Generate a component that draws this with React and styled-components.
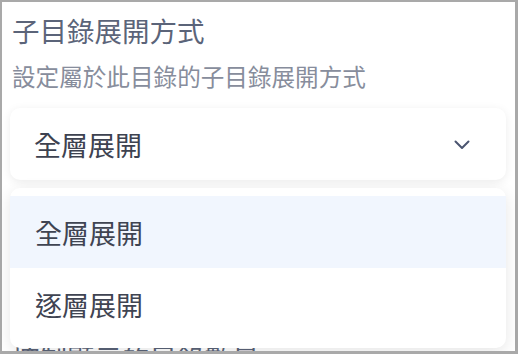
import React, { useState } from "react";
import styled, { createGlobalStyle } from "styled-components";

const GlobalStyle = createGlobalStyle`
  html, body {
    margin: 0;
    padding: 0;
    background: #a9a9a9;
  }
  body {
    font-family: "Noto Sans CJK TC", "Noto Sans", sans-serif;
  }
`;

const Frame = styled.div`
  position: relative;
  margin: 2px 3px 0 2px;
  height: 349px;
  background: #ffffff;
  padding: 10px 9px 0 8px;
  box-sizing: border-box;
`;

const Title = styled.div`
  font-size: 27.5px;
  line-height: 36px;
  color: #5b6479;
  padding-left: 2px;
  margin-top: ${(p) => p.$top || 0}px;
`;

const Subtitle = styled.div`
  margin-top: 12px;
  font-size: 23.6px;
  line-height: 32px;
  color: #878d9c;
  padding-left: 2px;
`;

const SelectWrap = styled.div`
  position: relative;
  margin-top: 16px;
`;

const SelectBox = styled.div`
  height: 72px;
  display: flex;
  align-items: center;
  justify-content: space-between;
  padding: 0 36px 0 24px;
  background: #ffffff;
  border-radius: 10px;
  box-shadow: 0 2px 10px rgba(0, 0, 0, 0.08);
  font-size: 27px;
  color: #3d4250;
  cursor: pointer;
`;

const Chevron = styled.svg`
  width: 16px;
  height: 10px;
  margin-top: 2px;
`;

const Menu = styled.div`
  position: absolute;
  z-index: 2;
  top: 80px;
  left: 0;
  right: 0;
  padding: 8px 0;
  background: #ffffff;
  border-radius: 10px;
  box-shadow: 0 4px 16px rgba(0, 0, 0, 0.1);
`;

const Option = styled.div`
  height: 72px;
  display: flex;
  align-items: center;
  padding-left: 25px;
  font-size: 27px;
  color: #3f4452;
  background: ${(p) => (p.$active ? "#f1f6fe" : "transparent")};
  cursor: pointer;
`;

const OPTIONS = ["全層展開", "逐層展開"];

export default function App() {
  const [value, setValue] = useState(OPTIONS[0]);

  return (
    <>
      <GlobalStyle />
      <Frame>
        <Title>子目錄展開方式</Title>
        <Subtitle>設定屬於此目錄的子目錄展開方式</Subtitle>
        <SelectWrap>
          <SelectBox>
            <span>{value}</span>
            <Chevron viewBox="0 0 16 10" fill="none">
              <path
                d="M1.5 1.5 L8 8 L14.5 1.5"
                stroke="#4b5570"
                strokeWidth="2"
                strokeLinecap="round"
                strokeLinejoin="round"
              />
            </Chevron>
          </SelectBox>
          <Menu>
            {OPTIONS.map((opt) => (
              <Option key={opt} $active={opt === value} onClick={() => setValue(opt)}>
                {opt}
              </Option>
            ))}
          </Menu>
        </SelectWrap>
        <Title $top={159}>控制顯示的目錄數量</Title>
      </Frame>
    </>
  );
}
